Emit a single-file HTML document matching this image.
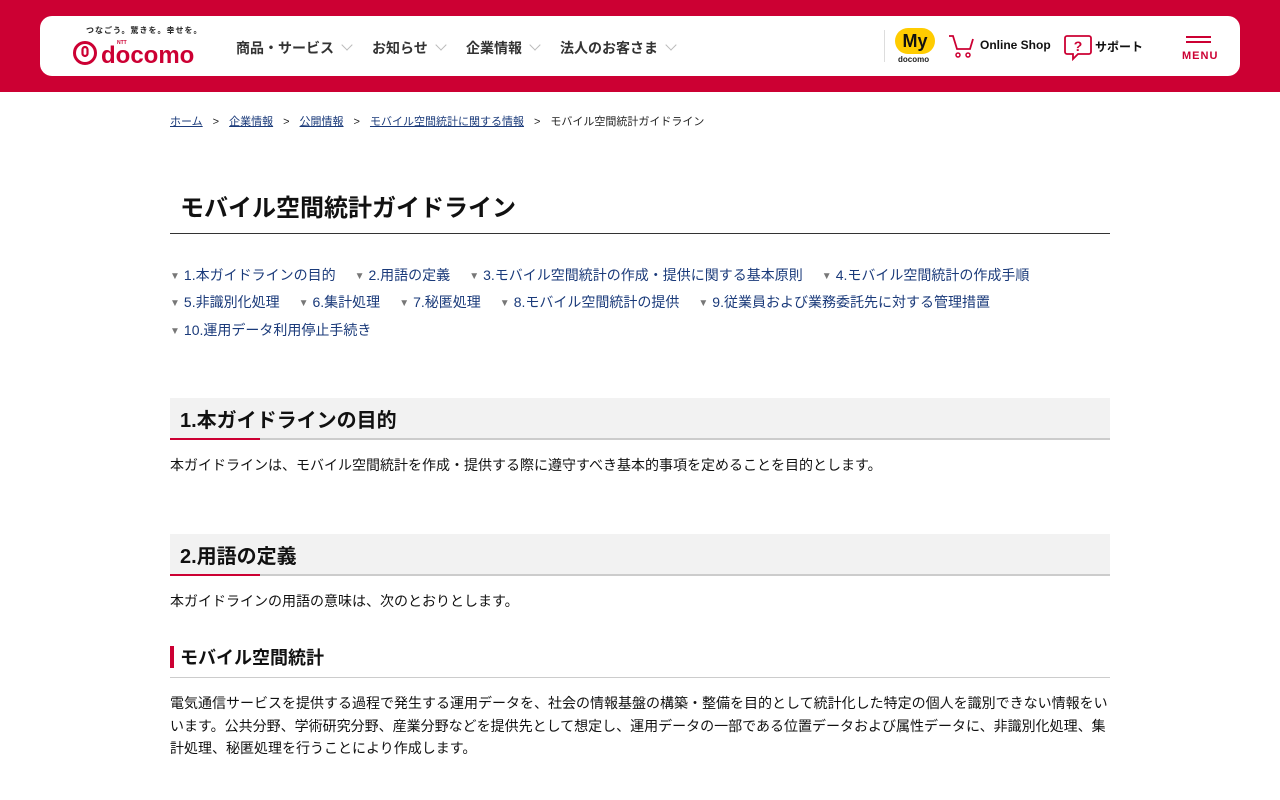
<!DOCTYPE html>
<html><head><meta charset="utf-8"><style>
*{margin:0;padding:0;box-sizing:border-box}
body{width:1280px;height:800px;overflow:hidden;background:#fff;font-family:"Liberation Sans","Noto Sans CJK JP",sans-serif;color:#111}
.hd{position:absolute;left:0;top:0;width:1280px;height:92px;background:#cc0033}
.box{position:absolute;left:40px;top:16px;width:1200px;height:60px;background:#fff;border-radius:12px}
.abs{position:absolute}
.nav{position:absolute;top:21px;font-size:14px;font-weight:bold;color:#333;white-space:nowrap}
.chev{display:inline-block;width:8px;height:8px;border-right:1.5px solid #bbb;border-bottom:1.5px solid #bbb;transform:rotate(45deg);margin-left:9px;position:relative;top:-4px}
.bc{position:absolute;top:113px;left:170px;font-size:11px;color:#222;white-space:nowrap}
.bc a{color:#1a3a7a;text-decoration:underline}
.bc span.s{margin:0 10px}
h1{position:absolute;left:170px;top:190px;width:940px;height:44px;border-bottom:1px solid #333;font-size:24px;padding-left:10px;line-height:38px}
.anc{position:absolute;left:170px;font-size:14px;color:#1a3a7a;white-space:nowrap}
.anc i{font-style:normal;color:#777;font-size:10px;margin-right:4px;position:relative;top:-1px}
.anc b{font-weight:normal;margin-right:19px}
.h2{position:absolute;left:170px;width:940px;height:42px;background:#f2f2f2;border-bottom:2px solid #ccc;font-size:20px;font-weight:bold;padding-left:10px;line-height:46px}
.h2:after{content:"";position:absolute;left:0;bottom:-2px;width:90px;height:2px;background:#cc0033}
.p{position:absolute;left:170px;width:945px;font-size:14px;line-height:22.5px;color:#111}
.h3{position:absolute;left:170px;top:646px;width:940px;height:32px;border-bottom:1px solid #ccc;font-size:18px;font-weight:bold;padding-left:10px;line-height:24px}
.h3:before{content:"";position:absolute;left:0;top:0;width:4px;height:22px;background:#cc0033}
</style></head><body>
<div class="hd"></div>
<div class="box"></div>
<div class="abs" style="left:86px;top:25px;font-size:8px;font-weight:bold;color:#222;letter-spacing:1px">つなごう。驚きを。幸せを。</div>
<svg class="abs" style="left:73px;top:40px" width="130" height="26" viewBox="0 0 130 26">
<circle cx="12" cy="13" r="10.5" fill="none" stroke="#cc0033" stroke-width="3"/>
<rect x="9.5" y="7" width="5" height="9" rx="2.5" fill="none" stroke="#cc0033" stroke-width="2.2"/>
<text x="28" y="23" font-family="Liberation Sans" font-weight="bold" font-size="24" fill="#cc0033">docomo</text>
<text x="44" y="4" font-family="Liberation Sans" font-weight="bold" font-size="5" fill="#cc0033">NTT</text>
</svg>
<div class="nav" style="left:236px;top:38px">商品・サービス<span class="chev"></span></div>
<div class="nav" style="left:372px;top:38px">お知らせ<span class="chev"></span></div>
<div class="nav" style="left:466px;top:38px">企業情報<span class="chev"></span></div>
<div class="nav" style="left:560px;top:38px">法人のお客さま<span class="chev"></span></div>
<div class="abs" style="left:884px;top:30px;width:1px;height:32px;background:#ddd"></div>
<div class="abs" style="left:895px;top:28px;width:40px;height:26px;border-radius:13px;background:#ffcc00;text-align:center;font-weight:bold;font-size:18px;line-height:26px;color:#111">My</div>
<div class="abs" style="left:898px;top:55px;font-size:8px;font-weight:bold;color:#222">docomo</div>
<svg class="abs" style="left:948px;top:35px" width="28" height="24" viewBox="0 0 28 24"><path d="M1 1 L5 1 L9 14 L22 14 L25 4" fill="none" stroke="#cc0033" stroke-width="1.8"/><circle cx="10" cy="20" r="2" fill="none" stroke="#cc0033" stroke-width="1.5"/><circle cx="20" cy="20" r="2" fill="none" stroke="#cc0033" stroke-width="1.5"/></svg>
<div class="abs" style="left:980px;top:38px;font-size:12px;font-weight:bold">Online Shop</div>
<svg class="abs" style="left:1064px;top:35px" width="28" height="26" viewBox="0 0 28 26"><path d="M3 1 H25 a2 2 0 0 1 2 2 V17 a2 2 0 0 1 -2 2 H14 L9 24 V19 H3 a2 2 0 0 1 -2 -2 V3 a2 2 0 0 1 2 -2z" fill="none" stroke="#cc0033" stroke-width="1.8"/><text x="14" y="16" text-anchor="middle" font-family="Liberation Sans" font-weight="bold" font-size="14" fill="#cc0033">?</text></svg>
<div class="abs" style="left:1095px;top:38px;font-size:12px;font-weight:bold">サポート</div>
<div class="abs" style="left:1186px;top:36px;width:25px;height:1.5px;background:#cc0033"></div>
<div class="abs" style="left:1186px;top:41px;width:25px;height:1.5px;background:#cc0033"></div>
<div class="abs" style="left:1182px;top:50px;font-size:11px;font-weight:bold;color:#cc0033;letter-spacing:1px">MENU</div>

<div class="bc"><a>ホーム</a><span class="s">&gt;</span><a>企業情報</a><span class="s">&gt;</span><a>公開情報</a><span class="s">&gt;</span><a>モバイル空間統計に関する情報</a><span class="s">&gt;</span>モバイル空間統計ガイドライン</div>

<h1>モバイル空間統計ガイドライン</h1>

<div class="anc" style="top:265px"><i>▼</i><b>1.本ガイドラインの目的</b><i>▼</i><b>2.用語の定義</b><i>▼</i><b>3.モバイル空間統計の作成・提供に関する基本原則</b><i>▼</i><b>4.モバイル空間統計の作成手順</b></div>
<div class="anc" style="top:292px"><i>▼</i><b>5.非識別化処理</b><i>▼</i><b>6.集計処理</b><i>▼</i><b>7.秘匿処理</b><i>▼</i><b>8.モバイル空間統計の提供</b><i>▼</i><b>9.従業員および業務委託先に対する管理措置</b></div>
<div class="anc" style="top:320px"><i>▼</i><b>10.運用データ利用停止手続き</b></div>

<div class="h2" style="top:398px">1.本ガイドラインの目的</div>
<div class="p" style="top:454px">本ガイドラインは、モバイル空間統計を作成・提供する際に遵守すべき基本的事項を定めることを目的とします。</div>
<div class="h2" style="top:534px">2.用語の定義</div>
<div class="p" style="top:590px">本ガイドラインの用語の意味は、次のとおりとします。</div>
<div class="h3">モバイル空間統計</div>
<div class="p" style="top:692px">電気通信サービスを提供する過程で発生する運用データを、社会の情報基盤の構築・整備を目的として統計化した特定の個人を識別できない情報をいいます。公共分野、学術研究分野、産業分野などを提供先として想定し、運用データの一部である位置データおよび属性データに、非識別化処理、集計処理、秘匿処理を行うことにより作成します。</div>
</body></html>
